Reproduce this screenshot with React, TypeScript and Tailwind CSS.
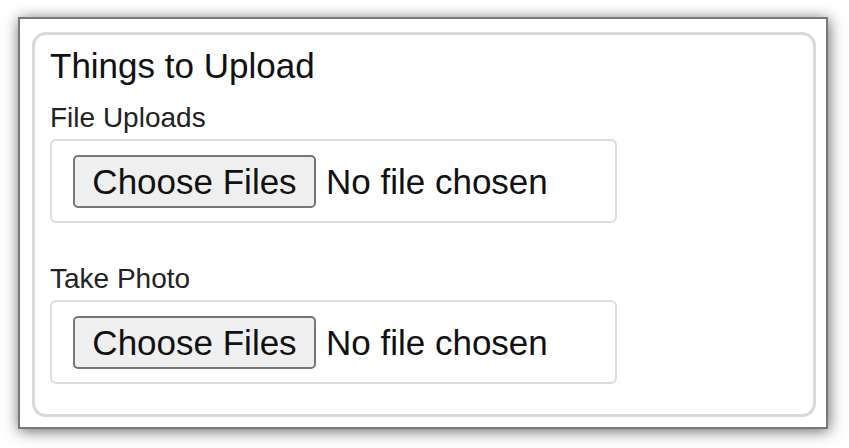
import React from "react";

function UploadRow() {
  return (
    <div className="flex h-[84px] w-[567px] items-center rounded-[6px] border-2 border-[#dddddd] pl-[21px]">
      <div className="flex h-[53px] w-[243px] items-center justify-center rounded-[5px] border-2 border-[#767676] bg-[#efefef] text-[35px] leading-[35px] text-[#111]">
        Choose Files
      </div>
      <div className="ml-[10px] text-[35px] leading-[35px] text-[#111]">No file chosen</div>
    </div>
  );
}

export default function App() {
  return (
    <div
      className="h-[448px] w-[849px] bg-white pl-[18px] pt-[17px]"
      style={{ fontFamily: '"Liberation Sans", Arial, sans-serif' }}
    >
      <div className="h-[412px] w-[810px] border-2 border-[#787878] bg-white pl-[12px] pt-[13px] shadow-[1px_2px_14px_rgba(0,0,0,0.6)]">
        <div className="h-[385px] w-[784px] rounded-[14px] border-[3px] border-[#d9d9d9] pl-[15px] pt-[11px]">
          <div className="h-[40px] text-[35px] leading-[40px] text-[#111]">Things to Upload</div>
          <div className="mt-[16px] text-[28px] leading-[32px] text-[#222]">File Uploads</div>
          <div className="mt-[5px]">
            <UploadRow />
          </div>
          <div className="mt-[40px] text-[28px] leading-[32px] text-[#222]">Take Photo</div>
          <div className="mt-[5px]">
            <UploadRow />
          </div>
        </div>
      </div>
    </div>
  );
}
